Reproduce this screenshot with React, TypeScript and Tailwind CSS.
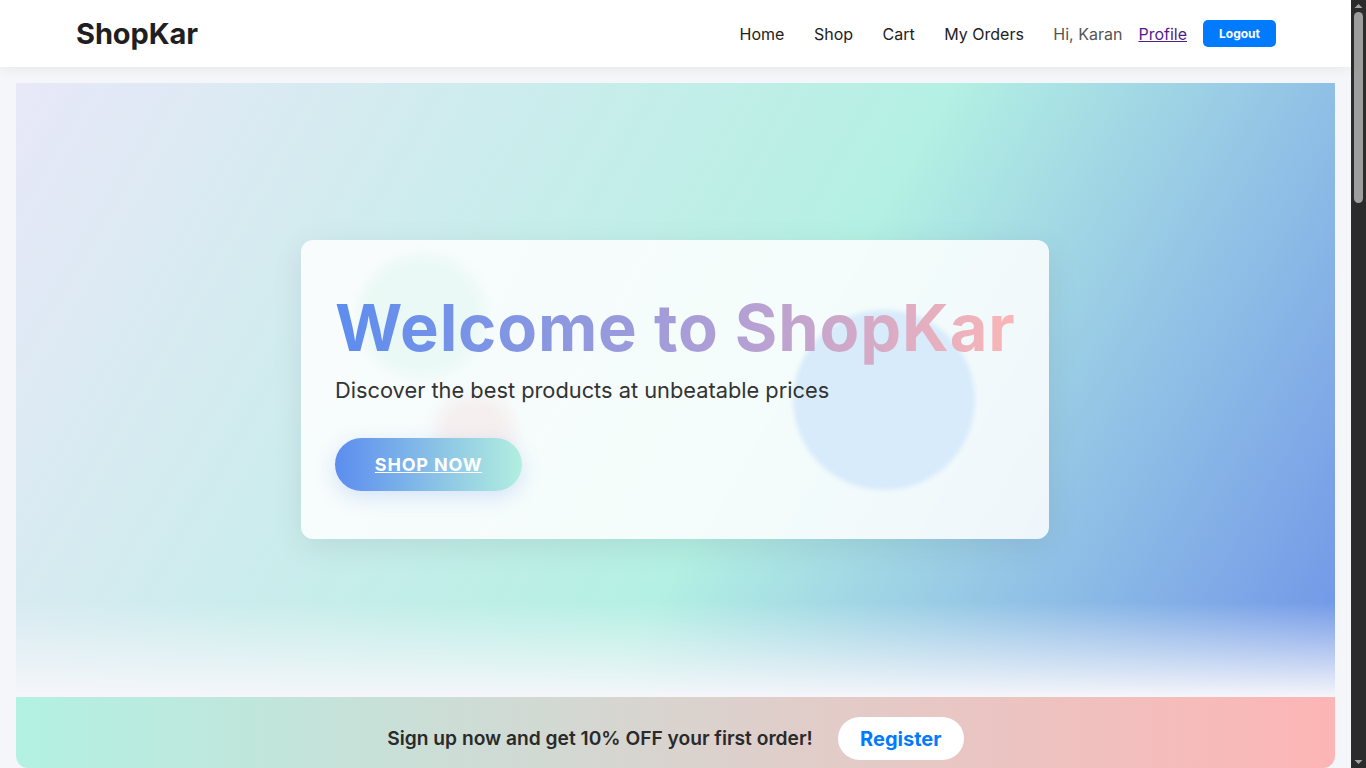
import React from "react";

const Navbar = () => {
  return (
    <nav className="bg-white h-[67px] shadow-[0_2px_12px_rgba(0,0,0,0.06)] relative z-10">
      <div className="flex items-center justify-between h-full pl-[76px] pr-[75px]">
        <h1 className="text-[29px] font-bold text-[#1f1f1f] tracking-[-0.1px]">ShopKar</h1>
        <ul className="flex items-center text-[16px] text-[#222]">
          <li className="mr-[29.5px]">Home</li>
          <li className="mr-[29.5px]">Shop</li>
          <li className="mr-[29.5px]">Cart</li>
          <li className="mr-[29.5px]">My Orders</li>
          <li className="mr-[16px] text-[#555]">Hi, Karan</li>
          <li className="mr-[16px]">
            <a href="#" className="text-[#551a8b] underline">Profile</a>
          </li>
          <li>
            <button className="bg-[#007bff] text-white text-[12px] font-bold rounded-[5px] w-[73px] h-[27px]">
              Logout
            </button>
          </li>
        </ul>
      </div>
    </nav>
  );
};

const Hero = () => {
  return (
    <section className="relative h-[614px] overflow-hidden bg-[linear-gradient(120deg,#e8e8f8_0%,#b4f0e3_56%,#6e93e8_100%)] flex items-center justify-center">
      <div className="absolute inset-x-0 bottom-0 h-[95px] bg-[linear-gradient(to_bottom,rgba(245,246,250,0),#f5f6fa)]" />
      <div className="relative w-[748px] h-[299px] rounded-[12px] bg-white/85 shadow-[0_8px_32px_rgba(0,0,0,0.08)] overflow-hidden px-[34px] pt-[48px] mt-[-1px] mr-[1px]">
        <div className="absolute left-[58px] top-[16px] w-[125px] h-[120px] rounded-full bg-[#d6f5ea]/40 blur-[6px]" />
        <div className="absolute left-[134px] top-[154px] w-[80px] h-[80px] rounded-full bg-[#f5dcdc]/40 blur-[8px]" />
        <div className="absolute left-[492px] top-[70px] w-[182px] h-[180px] rounded-full bg-[#d8ebfb] blur-[2px]" />
        <div className="relative">
          <h2 className="whitespace-nowrap w-max text-[65px] leading-[80px] font-bold bg-[linear-gradient(90deg,#5c8def_0%,#b4a0d4_60%,#fbb6b6_100%)] bg-clip-text text-transparent tracking-[0.85px]">
            Welcome to ShopKar
          </h2>
          <p className="text-[21.8px] text-[#333] mt-[6px]">
            Discover the best products at unbeatable prices
          </p>
          <button className="mt-[31px] w-[187px] h-[53px] rounded-full bg-[linear-gradient(90deg,#5b8def,#b2efdf)] text-white font-bold text-[18px] underline tracking-[0.8px] shadow-[0_6px_20px_rgba(92,141,239,0.22)]">
            SHOP NOW
          </button>
        </div>
      </div>
    </section>
  );
};

const Promo = () => {
  return (
    <div className="h-[71px] rounded-b-[12px] bg-[linear-gradient(90deg,#b2f1e3,#d6d6d1_45%,#fdb5b5)] flex items-start justify-center gap-[25px] pt-[20px]">
      <p className="text-[19.2px] font-semibold text-[#2a2a2a] leading-[43px]">
        Sign up now and get 10% OFF your first order!
      </p>
      <button className="bg-white text-[#007bff] font-bold text-[20px] rounded-full w-[126px] h-[43px]">
        Register
      </button>
    </div>
  );
};

const Scrollbar = () => {
  return (
    <div className="w-[15px] h-full bg-[#2b2b2b] flex flex-col items-center shrink-0">
      <svg width="15" height="12" viewBox="0 0 15 12" className="shrink-0">
        <path d="M3.5 8 L7.5 4 L11.5 8 Z" fill="#a3a3a3" />
      </svg>
      <div className="w-[9px] h-[191px] rounded-full bg-[#9e9e9e]" />
      <div className="flex-1" />
      <svg width="15" height="12" viewBox="0 0 15 12" className="shrink-0">
        <path d="M3.5 4 L7.5 8 L11.5 4 Z" fill="#a3a3a3" />
      </svg>
    </div>
  );
};

export default function App() {
  return (
    <div className="h-screen overflow-hidden flex bg-[#f5f6fa] font-['Inter',sans-serif]">
      <div className="flex-1 min-w-0">
        <Navbar />
        <main className="px-[16px] pt-[16px]">
          <Hero />
          <Promo />
        </main>
      </div>
      <Scrollbar />
    </div>
  );
}
